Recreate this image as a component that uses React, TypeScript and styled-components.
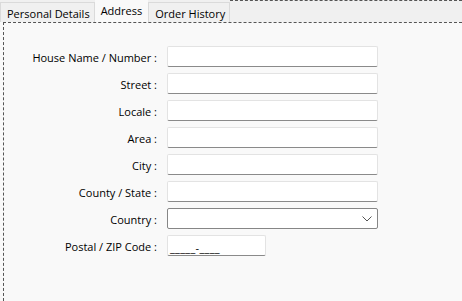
import React from "react";
import styled, { createGlobalStyle } from "styled-components";

const Global = createGlobalStyle`
  html, body { margin: 0; padding: 0; background: #f9f9f9; }
  body { font-family: "Open Sans", "Noto Sans", sans-serif; font-size: 11px; color: #000; }
`;

const Page = styled.div`
  width: 462px;
  height: 301px;
  overflow: hidden;
  display: flex;
  flex-direction: column;
  background: #f9f9f9;
`;

const TabStrip = styled.div`
  height: 22px;
  display: flex;
  align-items: flex-end;
  background: #f0f0f0;
  flex: none;
`;

const Tab = styled.div<{ $active?: boolean }>`
  height: ${p => (p.$active ? "22px" : "20px")};
  box-sizing: border-box;
  padding: ${p => (p.$active ? "0 5px 2px" : "1px 4px 0 6px")};
  display: flex;
  align-items: center;
  background: ${p => (p.$active ? "#f9f9f9" : "#f0f0f0")};
  border: 1px solid ${p => (p.$active ? "#f9f9f9" : "#dadada")};
  border-bottom: none;
  white-space: nowrap;
  font-size: 11px;
  line-height: 1;
  color: #000;
`;

const StripFill = styled.div`
  flex: 1;
  align-self: stretch;
  border-top: 1px dashed #555;
`;

const Body = styled.div`
  flex: 1;
  margin-left: 3px;
  border-top: 1px dashed #555;
  border-left: 1px dashed #555;
  padding: 23px 0 0 0;
`;

const Form = styled.div`
  display: grid;
  grid-template-columns: 153px 211px;
  column-gap: 10px;
  row-gap: 6px;
`;

const Label = styled.label`
  height: 21px;
  display: flex;
  align-items: center;
  justify-content: flex-end;
  font-size: 11px;
  color: #000;
  white-space: nowrap;
  padding-top: 2px;
  box-sizing: border-box;
`;

const Field = styled.div<{ $w?: number }>`
  width: ${p => (p.$w ? `${p.$w}px` : "100%")};
  height: 21px;
  box-sizing: border-box;
  background: #fff;
  border: 1px solid #e3e3e3;
  border-bottom: 1px solid #8a8a8a;
  border-radius: 2px;
  display: flex;
  align-items: center;
  padding: 4px 2px 0;
  font-size: 11px;
  letter-spacing: 0.3px;
  color: #000;
`;

const Select = styled.div`
  height: 21px;
  box-sizing: border-box;
  background: #fff;
  border: 1px solid #868686;
  border-radius: 2px;
  display: flex;
  align-items: center;
  justify-content: flex-end;
  padding-right: 5px;
`;

const Chevron = () => (
  <svg width="10" height="6" viewBox="0 0 10 6">
    <path d="M0.5 0.5 L5 5 L9.5 0.5" fill="none" stroke="#555" strokeWidth="1" />
  </svg>
);

const fields = ["House Name / Number", "Street", "Locale", "Area", "City", "County / State"];

export default function App() {
  return (
    <Page>
      <Global />
      <TabStrip>
        <Tab>Personal Details</Tab>
        <Tab $active>Address</Tab>
        <Tab>Order History</Tab>
        <StripFill />
      </TabStrip>
      <Body>
        <Form>
          {fields.map(f => (
            <React.Fragment key={f}>
              <Label>{f} :</Label>
              <Field />
            </React.Fragment>
          ))}
          <Label>Country :</Label>
          <Select>
            <Chevron />
          </Select>
          <Label>Postal / ZIP Code :</Label>
          <Field $w={99}>_____-____</Field>
        </Form>
      </Body>
    </Page>
  );
}
